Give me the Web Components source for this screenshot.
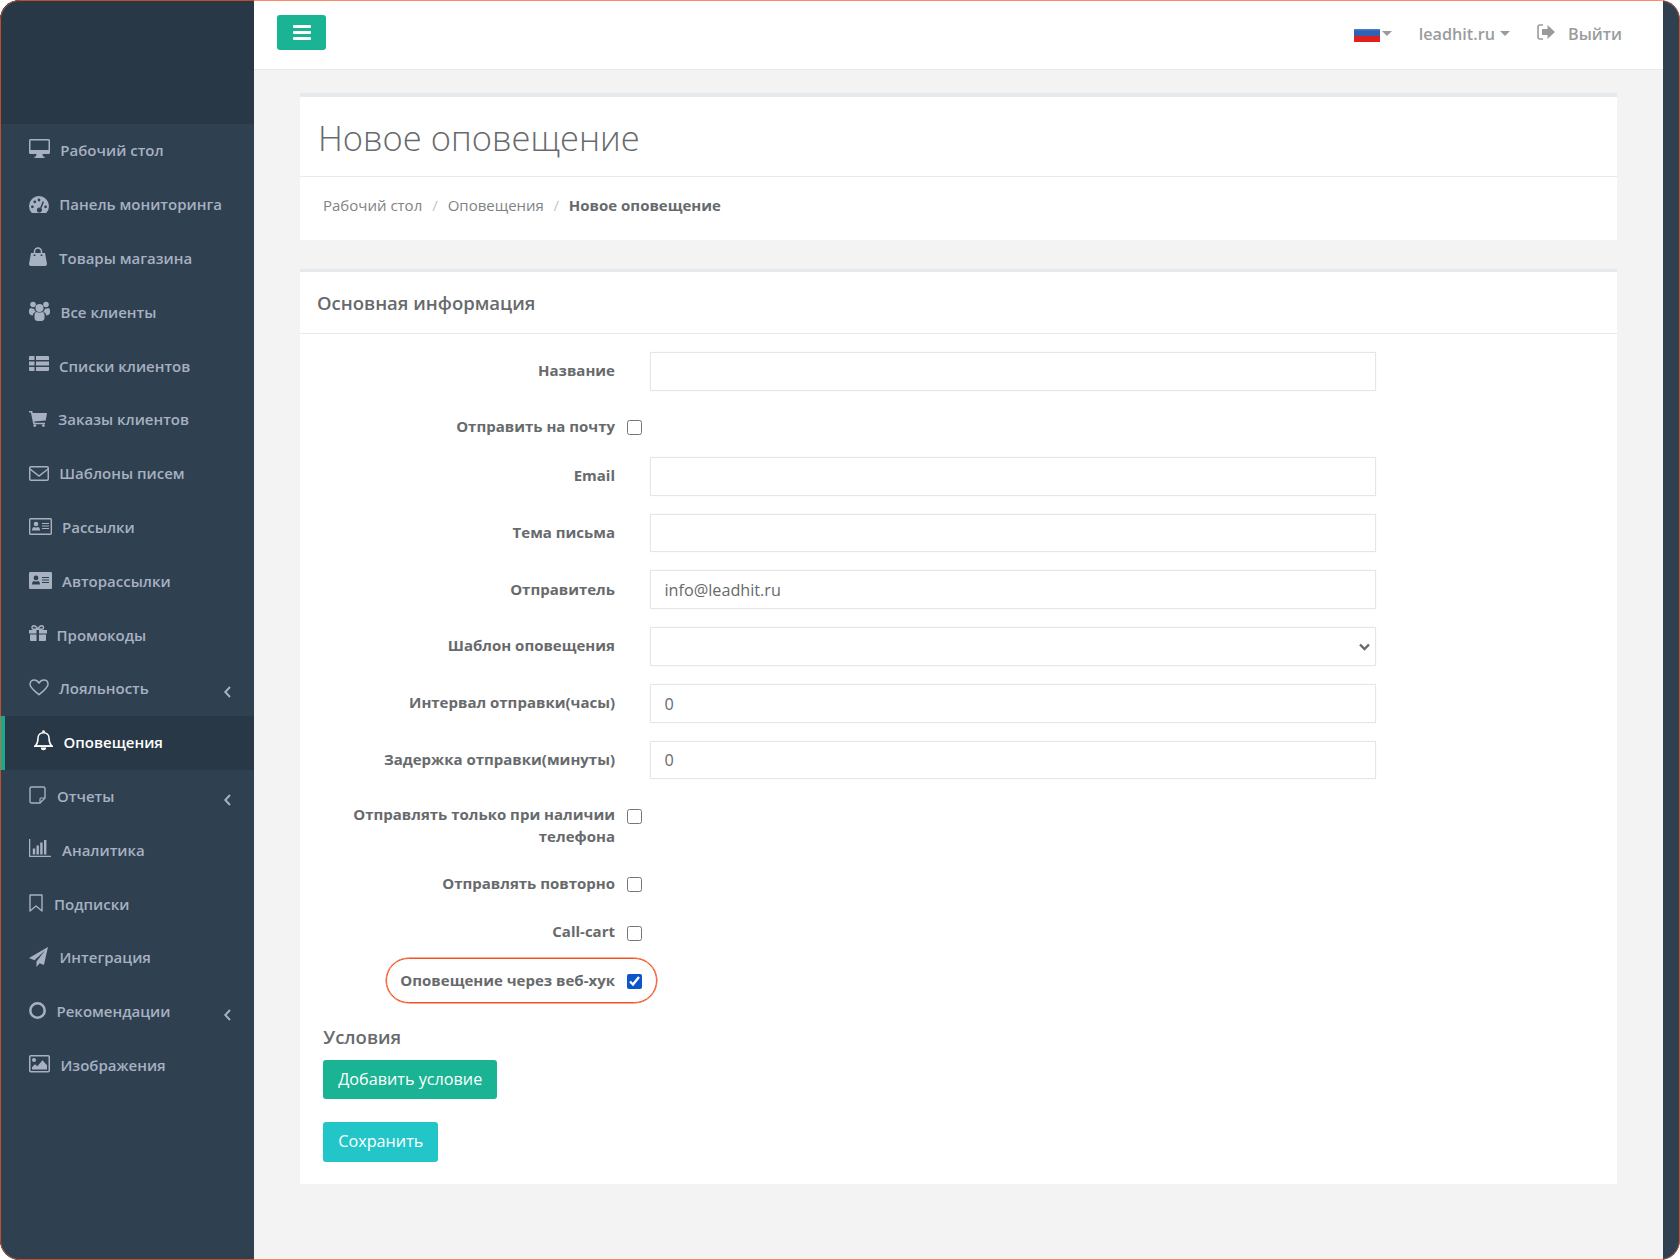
<!DOCTYPE html>
<html lang="ru">
<head>
<meta charset="utf-8">
<title>Новое оповещение</title>
<style>
    html, body { margin: 0; background: #fff; }
    body { font-family: "Open Sans", "Liberation Sans", sans-serif; color: #676a6c; }
</style>
</head>
<body>
<app-shell>
    <side-nav slot="sidebar">
        <nav-item icon="desktop" tx="60.3">Рабочий стол</nav-item>
        <nav-item icon="dashboard" tx="59.3">Панель мониторинга</nav-item>
        <nav-item icon="bag" tx="59">Товары магазина</nav-item>
        <nav-item icon="users" tx="60.5">Все клиенты</nav-item>
        <nav-item icon="list" tx="59">Списки клиентов</nav-item>
        <nav-item icon="cart" tx="58">Заказы клиентов</nav-item>
        <nav-item icon="envelope" tx="59.3">Шаблоны писем</nav-item>
        <nav-item icon="cardo" tx="62">Рассылки</nav-item>
        <nav-item icon="card" tx="62">Авторассылки</nav-item>
        <nav-item icon="gift" tx="56.5">Промокоды</nav-item>
        <nav-item icon="heart" tx="59" arrow>Лояльность</nav-item>
        <nav-item icon="bell" tx="63.5" active>Оповещения</nav-item>
        <nav-item icon="note" tx="57" arrow>Отчеты</nav-item>
        <nav-item icon="chart" tx="62">Аналитика</nav-item>
        <nav-item icon="bookmark" tx="54">Подписки</nav-item>
        <nav-item icon="plane" tx="59.5">Интеграция</nav-item>
        <nav-item icon="circle" tx="56.5" arrow>Рекомендации</nav-item>
        <nav-item icon="image" tx="60.5">Изображения</nav-item>
    </side-nav>
    <top-bar slot="top"></top-bar>
    <page-heading title="Новое оповещение">
        <span>Рабочий стол</span>
        <span>Оповещения</span>
        <strong>Новое оповещение</strong>
    </page-heading>
    <form-card title="Основная информация">
        <form-row label="Название"><text-field></text-field></form-row>
        <form-row label="Отправить на почту" check><check-field></check-field></form-row>
        <form-row label="Email"><text-field></text-field></form-row>
        <form-row label="Тема письма"><text-field></text-field></form-row>
        <form-row label="Отправитель"><text-field value="info@leadhit.ru"></text-field></form-row>
        <form-row label="Шаблон оповещения"><text-field select></text-field></form-row>
        <form-row label="Интервал отправки(часы)"><text-field value="0"></text-field></form-row>
        <form-row label="Задержка отправки(минуты)"><text-field value="0"></text-field></form-row>
        <form-row label="Отправлять только при наличии телефона" check tall><check-field></check-field></form-row>
        <form-row label="Отправлять повторно" check><check-field></check-field></form-row>
        <form-row label="Call-cart" check><check-field></check-field></form-row>
        <form-row label="Оповещение через веб-хук" check marked><check-field checked></check-field></form-row>
        <conditions-block></conditions-block>
    </form-card>
</app-shell>

<script>
// every icon is drawn in its own pixel box: [width, height, shift up from row centre, markup]
const ICONS = {
    desktop: [21, 19, 3.8, `<path fill-rule="evenodd" d="M1.5 0h18A1.5 1.5 0 0 1 21 1.5v12a1.5 1.5 0 0 1-1.5 1.5h-18A1.5 1.5 0 0 1 0 13.5v-12A1.5 1.5 0 0 1 1.5 0zM1.5 1.5V11h18V1.5z"/><path d="M7.5 15h6l.5 2.5h1.5V19h-10v-1.5H7z"/>`],
    dashboard: [20, 16, -1, `<path d="M2.8 16A10 10 0 1 1 17.2 16z"/><g fill="#2f4050"><circle cx="3.4" cy="9.8" r="1.4"/><circle cx="5.8" cy="4.8" r="1.4"/><circle cx="10" cy="3" r="1.4"/><circle cx="16.6" cy="9.8" r="1.4"/><path d="M13.7 4.3l1.3.6-2.6 6.3a2.5 2.5 0 1 1-4.2 3.2 2.5 2.5 0 0 1 2.9-3.7z"/></g>`],
    bag: [18, 19, 2.6, `<path d="M2 6h14l2 11a2 2 0 0 1-2 2H2a2 2 0 0 1-2-2z"/><path d="M5.5 9V4.5a3.5 3.5 0 0 1 7 0V9" fill="none" stroke="currentColor" stroke-width="1.5"/><path d="M4.6 7.5h1.8V9H4.6zM11.6 7.5h1.8V9h-1.8z" fill="#2f4050"/>`],
    users: [21, 20, 1.6, `<circle cx="10.5" cy="7" r="4"/><circle cx="4" cy="3.5" r="2.8"/><circle cx="17" cy="3.5" r="2.8"/><path d="M5.5 14.5c0-2 1-3.5 2.5-3.5 1 .8 4 .8 5 0 1.5 0 2.5 1.5 2.5 3.5V17c0 1.8-1.5 3-3 3h-4c-1.5 0-3-1.2-3-3z"/><path d="M0 9.5C0 8 1 7 2 7c1 .8 2 .8 3 .5.3 1.5 1 2.7 2 3.5-2 .3-3 1.5-3.2 3.5C1.5 14.5 0 13 0 11.5zM21 9.5C21 8 20 7 19 7c-1 .8-2 .8-3 .5-.3 1.5-1 2.7-2 3.5 2 .3 3 1.5 3.2 3.5 2.3 0 3.8-1.5 3.8-3z"/>`],
    list: [20, 15, 4.4, `<path d="M1 0h4.5v4H0V1a1 1 0 0 1 1-1zM7 0h12a1 1 0 0 1 1 1v3H7zM0 5.5h5.5v4H0zM7 5.5h13v4H7zM0 11h5.5v4H1a1 1 0 0 1-1-1zM7 11h13v3a1 1 0 0 1-1 1H7z"/>`],
    cart: [18, 16, .8, `<path d="M0 0h3.2l.6 2H18l-1.3 7.4L5.3 10.5l.3 1.3H16v1.4H4.3L1.9 1.4H0z"/><circle cx="5.8" cy="14.6" r="1.4"/><circle cx="14.4" cy="14.6" r="1.4"/>`],
    envelope: [20, 15, -.6, `<rect x=".75" y=".75" width="18.5" height="13.5" rx="1.2" fill="none" stroke="currentColor" stroke-width="1.5"/><path d="M1 3l9 7 9-7" fill="none" stroke="currentColor" stroke-width="1.5"/>`],
    cardo: [23, 17, 1.6, `<rect x=".7" y=".7" width="21.6" height="15.6" rx="1" fill="none" stroke="currentColor" stroke-width="1.4"/><circle cx="7" cy="6" r="2.3"/><path d="M3 12.5c0-2.5 1.2-3.5 2-3.5 1 .7 3 .7 4 0 .8 0 2 1 2 3.5z"/><path d="M13 5h7v1h-7zM13 7.5h7v1h-7zM13 10h7v1h-7zM5 16h2v1H5zM15 16h2v1h-2z"/>`],
    card: [23, 17, .8, `<path fill-rule="evenodd" d="M1.2 0h20.6A1.2 1.2 0 0 1 23 1.2v14.6a1.2 1.2 0 0 1-1.2 1.2H1.2A1.2 1.2 0 0 1 0 15.8V1.2A1.2 1.2 0 0 1 1.2 0zM13 5v1h7V5zM13 7.5v1h7v-1zM13 10v1h7v-1zM7 3.5a2.4 2.4 0 1 0 0 4.8 2.4 2.4 0 0 0 0-4.8zM3 12.5h8c0-2.5-1.2-3.5-2-3.5-1 .7-3 .7-4 0-.8 0-2 1-2 3.5z"/>`],
    gift: [18, 16, 2.4, `<path d="M0 5h7.5v3.5H0zM10 5h8v3.5h-8zM1 9.5h6.5V16H2a1 1 0 0 1-1-1zM10 9.5h7V15a1 1 0 0 1-1 1h-6z"/><path d="M8.7 4.3C7.5 1.5 6 .7 4.8.7 3.6.7 3 1.5 3 2.5s.8 1.8 2 1.8zM8.8 4.3C10 1.5 11.5.7 12.7.7c1.2 0 1.8.8 1.8 1.8s-.8 1.8-2 1.8z" fill="none" stroke="currentColor" stroke-width="1.4"/>`],
    heart: [20, 17, 1.8, `<path d="M10 15.8C6 12.2 1 8.6 1 5.2 1 2.7 2.8 1 5.2 1 7.2 1 9 2.3 10 4c1-1.7 2.8-3 4.8-3C17.2 1 19 2.7 19 5.2c0 3.4-5 7-9 10.6z" fill="none" stroke="currentColor" stroke-width="1.5" stroke-linejoin="round"/>`],
    bell: [19, 21, 2.4, `<path d="M9.5 2.7c3.4 0 5.5 2.4 5.5 5.3 0 4 1 6.3 2.7 8H1.3C3 14.3 4 12 4 8c0-2.9 2.1-5.3 5.5-5.3z" fill="none" stroke="currentColor" stroke-width="1.5" stroke-linejoin="round"/><circle cx="9.5" cy="1.6" r="1.3"/><path d="M0 15.5h19V17H0zM6.8 17.5h5.4a2.7 2.7 0 0 1-5.4 0z"/>`],
    note: [17, 18, 1.2, `<path d="M11 17H2.5A1.5 1.5 0 0 1 1 15.5v-13A1.5 1.5 0 0 1 2.5 1h12A1.5 1.5 0 0 1 16 2.5V12z" fill="none" stroke="currentColor" stroke-width="1.4" stroke-linejoin="round"/><path d="M11 16.5V13a1 1 0 0 1 1-1h3.5" fill="none" stroke="currentColor" stroke-width="1.2"/>`],
    chart: [22, 18, 3.6, `<path d="M0 0h1.3v16.7H22V18H0zM3.8 9.5h2.4v6H3.8zM7.5 6.5h2.4v9H7.5zM11.2 3.5h2.4v12h-2.4zM15 1h2.4v14.5H15z"/>`],
    bookmark: [14, 18, 1.2, `<path d="M1 1h12v16l-6-5-6 5z" fill="none" stroke="currentColor" stroke-width="1.4" stroke-linejoin="round"/>`],
    plane: [19, 20, .8, `<path d="M19 0L0 11l5.5 2.3L16 3.5 7.5 14.5V20l3.2-3.7 4.2 1.700z"/>`],
    circle: [17, 17, 1.4, `<circle cx="8.5" cy="8.5" r="7.2" fill="none" stroke="currentColor" stroke-width="2.5"/>`],
    image: [21, 18, 1.2, `<rect x=".75" y=".75" width="19.5" height="16" rx="1" fill="none" stroke="currentColor" stroke-width="1.5"/><circle cx="5" cy="5" r="2"/><path d="M3 14.5v-2.2l3-3 2.3 2 5.2-6 4.5 5v4.2z"/>`]
};

class AppShell extends HTMLElement {
    constructor() {
        super();
        this.attachShadow({ mode: 'open' });
        this.shadowRoot.innerHTML = `
            <style>
                :host {
                    display: grid;
                    grid-template-columns: 254px 1fr 17px;
                    width: 1680px;
                    height: 1260px;
                    position: relative;
                    border-radius: 20px;
                    overflow: hidden;
                    background: #2f4050;
                    box-sizing: border-box;
                }
                /* thin orange frame lying over the whole screenshot */
                :host::after {
                    content: "";
                    position: absolute;
                    inset: 0;
                    border: 1px solid rgba(255, 87, 34, .7);
                    border-radius: 20px;
                    pointer-events: none;
                }
                main { background: #f3f3f3; display: flex; flex-direction: column; min-width: 0; }
                .content { padding: 23px 46px 0; display: flex; flex-direction: column; gap: 29px; }
            </style>
            <slot name="sidebar"></slot>
            <main>
                <slot name="top"></slot>
                <div class="content"><slot></slot></div>
            </main>
            <div></div>
        `;
    }
}

class SideNav extends HTMLElement {
    constructor() {
        super();
        this.attachShadow({ mode: 'open' });
        this.shadowRoot.innerHTML = `
            <style>
                :host { display: flex; flex-direction: column; background: #2f4050; }
                .logo { height: 124px; background: #293846; flex: none; }
            </style>
            <div class="logo"></div>
            <slot></slot>
        `;
    }
}

class NavItem extends HTMLElement {
    constructor() {
        super();
        this.attachShadow({ mode: 'open' });
    }

    connectedCallback() {
        const [w, h, up, markup] = ICONS[this.getAttribute('icon')];
        const active = this.hasAttribute('active');
        const start = active ? 34 : 29;
        const boxWidth = parseFloat(this.getAttribute('tx')) - start;
        this.shadowRoot.innerHTML = `
            <style>
                :host {
                    display: flex;
                    align-items: center;
                    height: 53.8px;
                    flex: none;
                    box-sizing: border-box;
                    padding-left: ${start}px;
                    padding-bottom: 1px;
                    color: #a7b1c2;
                    font: 600 15px/20px "Open Sans", sans-serif;
                    white-space: nowrap;
                }
                :host([active]) {
                    background: #293846;
                    color: #fff;
                    box-shadow: inset 5px 0 0 #19aa8d;
                }
                .icon { width: ${boxWidth}px; flex: none; display: flex; margin-bottom: ${up}px; }
                svg { display: block; fill: currentColor; flex: none; overflow: visible; }
                .arrow { margin-left: auto; margin-right: 23px; margin-top: 8px; display: flex; }
            </style>
            <span class="icon"><svg width="${w}" height="${h}" viewBox="0 0 ${w} ${h}">${markup}</svg></span>
            <slot></slot>
            ${this.hasAttribute('arrow') ? `<span class="arrow"><svg width="7" height="12" viewBox="0 0 7 12"><path d="M6 1L1.3 6 6 11" fill="none" stroke="currentColor" stroke-width="2"/></svg></span>` : ''}
        `;
    }
}

class TopBar extends HTMLElement {
    constructor() {
        super();
        this.attachShadow({ mode: 'open' });
        this.shadowRoot.innerHTML = `
            <style>
                :host {
                    display: flex;
                    align-items: center;
                    height: 70px;
                    box-sizing: border-box;
                    background: #fff;
                    border-bottom: 1px solid #e7eaec;
                    padding: 0 41px 4px 23px;
                    color: #999c9e;
                    font: 600 16.2px/22px "Open Sans", sans-serif;
                }
                .menu {
                    width: 49px;
                    height: 35px;
                    background: #1ab394;
                    border-radius: 3px;
                    display: flex;
                    flex-direction: column;
                    justify-content: center;
                    align-items: center;
                    gap: 2.5px;
                }
                .menu i { display: block; width: 18px; height: 3.2px; background: #fff; border-radius: 1px; }
                .right { margin-left: auto; margin-top: 2px; display: flex; align-items: center; }
                .flag {
                    width: 26px;
                    height: 13px;
                    margin-top: 4px;
                    background: linear-gradient(#5b86c8 0, #2f62b4 2px, #2f62b4 6.5px, #e0201f 7px);
                }
                .caret {
                    width: 0;
                    height: 0;
                    border-left: 5px solid transparent;
                    border-right: 5px solid transparent;
                    border-top: 5px solid #999c9e;
                    margin-left: 2px;
                }
                .site { margin-left: 27px; display: flex; align-items: center; }
                .site .caret { margin-left: 5px; }
                .out { margin-left: 27px; display: flex; align-items: center; gap: 13px; }
                svg { display: block; margin-bottom: 4px; }
            </style>
            <div class="menu"><i></i><i></i><i></i></div>
            <div class="right">
                <span class="flag"></span><span class="caret"></span>
                <span class="site">leadhit.ru<span class="caret"></span></span>
                <span class="out">
                    <svg width="18" height="16" viewBox="0 0 18 16"><path d="M6 1H3a2 2 0 0 0-2 2v10a2 2 0 0 0 2 2h3" fill="none" stroke="#999c9e" stroke-width="1.6"/><path d="M5 5h5.5V1L18 8l-7.5 7v-4H5z" fill="#999c9e"/></svg>
                    Выйти
                </span>
            </div>
        `;
    }
}

class PageHeading extends HTMLElement {
    constructor() {
        super();
        this.attachShadow({ mode: 'open' });
        this.shadowRoot.innerHTML = `
            <style>
                :host {
                    display: block;
                    background: #fff;
                    border-top: 4px solid #e7eaec;
                    height: 147px;
                    box-sizing: border-box;
                }
                h1 {
                    margin: 0;
                    height: 80px;
                    box-sizing: border-box;
                    border-bottom: 1px solid #e7eaec;
                    padding: 0 0 0 18px;
                    font: 300 34.5px/82px "Open Sans", sans-serif;
                    color: #676a6c;
                }
                nav {
                    padding: 16.5px 0 0 23px;
                    font: 400 15px/22px "Open Sans", sans-serif;
                    color: #808386;
                }
                ::slotted(strong) { color: #676a6c; font-weight: 700; }
                ::slotted(:first-child)::after { content: "/"; color: #c4c6c8; margin: 0 6px 0 10px; }
                ::slotted(span:nth-child(2))::after { content: "/"; color: #c4c6c8; margin: 0 6px 0 9.5px; }
            </style>
            <h1>${this.getAttribute('title')}</h1>
            <nav><slot></slot></nav>
        `;
    }
}

class FormCard extends HTMLElement {
    constructor() {
        super();
        this.attachShadow({ mode: 'open' });
        this.shadowRoot.innerHTML = `
            <style>
                :host {
                    display: block;
                    background: #fff;
                    border-top: 3.5px solid #e7eaec;
                    height: 915px;
                    box-sizing: border-box;
                }
                h2 {
                    margin: 0;
                    height: 62px;
                    box-sizing: border-box;
                    border-bottom: 1px solid #e7eaec;
                    padding-left: 17px;
                    font: 600 18.5px/62px "Open Sans", sans-serif;
                    color: #676a6c;
                }
                .body { padding-top: 18px; }
            </style>
            <h2>${this.getAttribute('title')}</h2>
            <div class="body"><slot></slot></div>
        `;
    }
}

class FormRow extends HTMLElement {
    constructor() {
        super();
        this.attachShadow({ mode: 'open' });
        this.shadowRoot.innerHTML = `
            <style>
                :host {
                    display: flex;
                    align-items: center;
                    height: 38.7px;
                    margin-bottom: 18px;
                    position: relative;
                }
                :host([check]) { height: 30.4px; align-items: flex-start; }
                :host([tall]) { height: 50.7px; }
                label {
                    width: 315px;
                    flex: none;
                    box-sizing: border-box;
                    padding-left: 40px;
                    text-align: right;
                    font: 700 15px/22px "Open Sans", sans-serif;
                    color: #676a6c;
                    margin-bottom: 2px;
                }
                :host([check]) label { padding-top: 6px; margin-bottom: 0; }
                /* the hand-drawn marker round the web-hook row */
                .mark {
                    position: absolute;
                    left: 86px;
                    top: -4.5px;
                    width: 271px;
                    height: 45px;
                    box-sizing: border-box;
                    border: 1px solid #f4511e;
                    box-shadow: 0 0 0 .5px #f4511e;
                    border-radius: 23px;
                    pointer-events: none;
                }
            </style>
            <label>${this.getAttribute('label')}</label>
            <slot></slot>
            ${this.hasAttribute('marked') ? '<span class="mark"></span>' : ''}
        `;
    }
}

class TextField extends HTMLElement {
    constructor() {
        super();
        this.attachShadow({ mode: 'open' });
    }

    connectedCallback() {
        const value = this.getAttribute('value') || '';
        const control = this.hasAttribute('select')
            ? `<select><option></option></select>
               <svg class="chevron" width="11" height="8" viewBox="0 0 11 8"><path d="M1 1.5L5.5 6 10 1.5" fill="none" stroke="#676a6c" stroke-width="2.4"/></svg>`
            : `<input type="text" value="${value}">`;
        this.shadowRoot.innerHTML = `
            <style>
                :host { display: block; position: relative; margin-left: 35px; width: 726px; height: 100%; }
                input, select {
                    display: block;
                    width: 100%;
                    height: 100%;
                    box-sizing: border-box;
                    border: 1px solid #e5e6e7;
                    box-shadow: 0 0 1px #dcdddf;
                    border-radius: 1px;
                    background: #fff;
                    padding: 1px 13.5px 0;
                    margin: 0;
                    font: 400 16.2px "Open Sans", sans-serif;
                    color: #676a6c;
                    outline: none;
                }
                select { appearance: none; }
                .chevron { position: absolute; right: 6px; top: 15.5px; pointer-events: none; }
            </style>
            ${control}
        `;
    }
}

class CheckField extends HTMLElement {
    constructor() {
        super();
        this.attachShadow({ mode: 'open' });
    }

    connectedCallback() {
        this.shadowRoot.innerHTML = `
            <style>
                :host { display: block; margin: 11.5px 0 0 12px; height: 15px; }
                input { display: block; width: 15px; height: 15px; margin: 0; accent-color: #0b57c9; }
            </style>
            <input type="checkbox" ${this.hasAttribute('checked') ? 'checked' : ''}>
        `;
    }
}

class ConditionsBlock extends HTMLElement {
    constructor() {
        super();
        this.attachShadow({ mode: 'open' });
        this.shadowRoot.innerHTML = `
            <style>
                :host { display: block; padding: 12.7px 0 0 23.3px; }
                h3 { margin: 0 0 10px; font: 600 18.5px/26px "Open Sans", sans-serif; color: #676a6c; }
                button {
                    display: block;
                    height: 39.7px;
                    border: 0;
                    border-radius: 3px;
                    padding: 0 15px 1px;
                    color: #fff;
                    font: 400 16.2px "Open Sans", sans-serif;
                }
                .add { background: #1ab394; margin-bottom: 22.7px; }
                .save { background: #23c6c8; }
            </style>
            <h3>Условия</h3>
            <button class="add">Добавить условие</button>
            <button class="save">Сохранить</button>
        `;
    }
}

customElements.define('app-shell', AppShell);
customElements.define('side-nav', SideNav);
customElements.define('nav-item', NavItem);
customElements.define('top-bar', TopBar);
customElements.define('page-heading', PageHeading);
customElements.define('form-card', FormCard);
customElements.define('form-row', FormRow);
customElements.define('text-field', TextField);
customElements.define('check-field', CheckField);
customElements.define('conditions-block', ConditionsBlock);
</script>
</body>
</html>
